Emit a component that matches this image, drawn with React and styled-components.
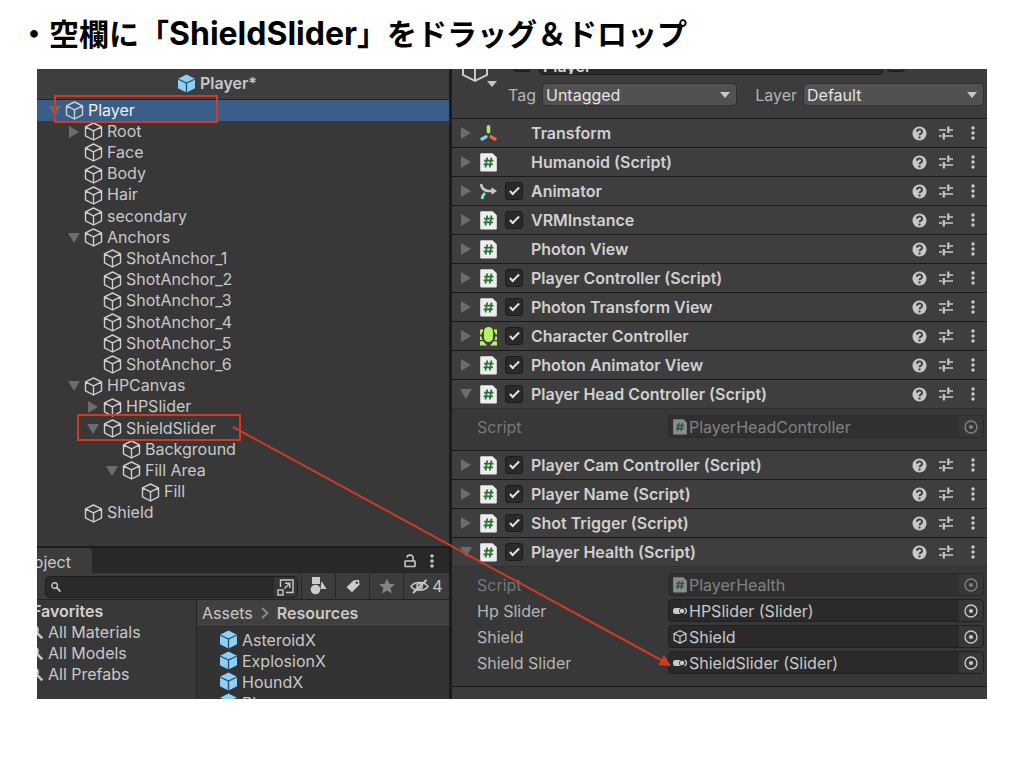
import * as React from "react";
import styled, { createGlobalStyle } from "styled-components";

const GlobalStyle = createGlobalStyle`
  * {
    box-sizing: border-box;
  }
  body {
    margin: 0;
    background: #fff;
  }
  button, input, select {
    font: inherit;
    color: inherit;
    margin: 0;
    padding: 0;
    border: 0;
    background: none;
  }
  svg {
    display: block;
    flex-shrink: 0;
  }
`;

const Slide = styled.main`
  min-height: 100vh;
  background: #fff;
`;
const Title = styled.h1`
  margin: 0;
  padding: 12px 19px 13px;
  font-family: Inter, "Noto Sans CJK JP", sans-serif;
  font-size: 30px;
  line-height: 44px;
  font-weight: 700;
  color: #000;
`;
const TitleName = styled.span`
  font-size: 32px;
`;
const Editor = styled.section`
  position: relative;
  display: grid;
  grid-template-columns: minmax(0, 412fr) minmax(0, 535fr);
  gap: 3px;
  height: 630px;
  margin: 0 37px;
  overflow: hidden;
  background: #1c1c1c;
  color: #c8c8c8;
  font-family: Inter, sans-serif;
  font-size: 16px;
  line-height: 20px;
  white-space: nowrap;
`;
const Annotations = styled.svg`
  position: absolute;
  top: 0;
  left: 0;
  width: 100%;
  height: 100%;
  pointer-events: none;
`;

/* Hierarchy */
const LeftColumn = styled.div`
  display: flex;
  flex-direction: column;
  min-height: 0;
`;
const StageHeader = styled.header`
  display: flex;
  align-items: center;
  justify-content: center;
  gap: 4px;
  flex: none;
  height: 31px;
  padding: 0 52px 2px 0;
  background: #3e3e3e;
  border-bottom: 1px solid #232323;
  font-weight: 600;
`;
const Tree = styled.ul`
  display: grid;
  grid-auto-rows: 1fr;
  flex: none;
  height: 424px;
  margin: 0;
  padding: 0;
  list-style: none;
`;
const TreeRow = styled.li`
  display: flex;
  align-items: center;
  gap: 4px;
  padding-left: ${(p) => 12 + p.$depth * 19}px;
  background: ${(p) => (p.$selected ? "#3a5e87" : "transparent")};
  color: ${(p) => (p.$selected ? "#f0f0f0" : "inherit")};
`;
const TreeName = styled.span`
  padding-bottom: 2px;
  line-height: 18px;
`;
const TreePane = styled.div`
  flex: none;
  height: 477px;
  background: #383838;
`;
const Foldout = styled.button`
  display: flex;
  align-items: center;
  justify-content: center;
  width: 12px;
  height: 16px;
  color: #6c6c6c;
`;

/* Project */
const ProjectPane = styled.div`
  display: flex;
  flex-direction: column;
  flex: 1;
  min-height: 0;
  margin-top: 2px;
  background: #383838;
`;
const TabBar = styled.div`
  display: flex;
  align-items: center;
  flex: none;
  height: 25px;
  padding-right: 7px;
  background: #282828;
`;
const Tab = styled.div`
  display: flex;
  justify-content: flex-end;
  width: 55px;
  height: 25px;
  margin-right: auto;
  padding: 4px 21px 0 0;
  overflow: hidden;
  border-radius: 0 4px 0 0;
  background: #3c3c3c;
`;
const IconButton = styled.button`
  display: flex;
  align-items: center;
  justify-content: center;
  width: ${(p) => p.$width || 16}px;
  height: 20px;
`;
const Toolbar = styled.div`
  display: flex;
  flex: none;
  height: 27px;
  padding-left: 8px;
  background: #3c3c3c;
  border-bottom: 1px solid #232323;
`;
const SearchBox = styled.label`
  display: flex;
  align-items: center;
  flex: 1;
  min-width: 0;
  height: 22px;
  margin: 3px 3px 0 0;
  padding-left: 5px;
  overflow: hidden;
  border: 1px solid #1e1e1e;
  border-radius: 5px;
  background: #2a2a2a;
`;
const SearchInput = styled.input`
  flex: 1;
  min-width: 0;
  outline: none;
`;
const SearchJump = styled.button`
  display: flex;
  align-items: center;
  justify-content: center;
  width: 23px;
  height: 20px;
  background: #353535;
`;
const ToolButton = styled.button`
  display: flex;
  align-items: center;
  justify-content: center;
  gap: 3px;
  width: ${(p) => p.$width || 34}px;
  height: 26px;
  border-left: 1px solid #282828;
`;
const ProjectBody = styled.div`
  display: grid;
  grid-template-columns: minmax(0, 160fr) minmax(0, 252fr);
  flex: 1;
  min-height: 0;
`;
const Favorites = styled.div`
  overflow: hidden;
  border-right: 1px solid #232323;
`;
const FavoritesTitle = styled.div`
  display: flex;
  align-items: center;
  height: 21px;
  margin-left: -5px;
  font-weight: 600;
  color: #d2d2d2;
`;
const FavoriteRow = styled.div`
  display: flex;
  align-items: center;
  gap: 5px;
  height: 21px;
  margin-left: -8px;
`;
const Assets = styled.div`
  overflow: hidden;
  background: #333333;
`;
const Breadcrumb = styled.nav`
  display: flex;
  align-items: center;
  gap: 8px;
  height: 27px;
  padding-left: 5px;
  background: #404040;
  border-bottom: 1px solid #2c2c2c;
`;
const Crumb = styled.a`
  color: inherit;
  text-decoration: none;
  font-weight: ${(p) => (p.$current ? 600 : 400)};
`;
const AssetRow = styled.div`
  display: flex;
  align-items: center;
  gap: 4px;
  height: 21px;
  padding-left: 22px;
`;
const AssetList = styled.div`
  padding-top: 2px;
`;

/* Inspector */
const Inspector = styled.div`
  min-height: 0;
  background: #3c3c3c;
`;
const ObjectHeader = styled.div`
  display: flex;
  gap: 10px;
  height: 49px;
  padding: 0 3px 0 8px;
  background: #3c3c3c;
`;
const ObjectIcon = styled.div`
  display: flex;
  align-items: flex-end;
  flex: none;
  width: 38px;
  height: 18px;
`;
const ObjectFields = styled.div`
  flex: 1;
  min-width: 0;
`;
const NameRow = styled.div`
  display: flex;
  align-items: flex-end;
  gap: 4px;
  height: 6px;
  padding-left: 5px;
  overflow: hidden;
`;
const NameInput = styled.input`
  flex: 1;
  min-width: 0;
  height: 18px;
  margin-left: 4px;
  padding: 0 3px;
  border: 1px solid #1e1e1e;
  border-radius: 4px;
  background: #2a2a2a;
  color: #d2d2d2;
  font-weight: 600;
`;
const StaticLabel = styled.label`
  width: 75px;
  height: 24px;
`;
const TagRow = styled.div`
  display: grid;
  grid-template-columns: 32px minmax(0, 194fr) 62px minmax(0, 180fr);
  align-items: center;
  column-gap: 2px;
  padding-top: 8px;
`;
const FieldLabel = styled.label`
  color: #b4b4b4;
  text-align: ${(p) => p.$align || "left"};
  padding-right: ${(p) => (p.$align ? 4 : 0)}px;
`;
const SelectBox = styled.div`
  display: grid;
  align-items: center;
  border: 1px solid #303030;
  border-radius: 4px;
  background: #515151;
  color: #e4e4e4;

  > * {
    grid-area: 1 / 1;
  }
  > svg {
    justify-self: end;
    margin-right: 6px;
    pointer-events: none;
  }
`;
const Select = styled.select`
  appearance: none;
  width: 100%;
  height: 21px;
  padding-left: 3px;
`;
const Component = styled.section`
  border-top: 1px solid #1a1a1a;
  background: #383838;
`;
const ComponentHeader = styled.header`
  display: flex;
  align-items: center;
  gap: 8px;
  height: 28px;
  padding: 0 6px 0 8px;
  background: #3e3e3e;
`;
const Slot = styled.div`
  width: 18px;
  height: 18px;
  flex: none;
`;
const Check = styled.input`
  appearance: none;
  display: flex;
  justify-content: center;
  flex: none;
  width: 18px;
  height: 18px;
  border: 1px solid #1c1c1c;
  border-radius: 3px;
  background: #2a2a2a;

  &:checked::after {
    content: "";
    width: 3px;
    height: 8px;
    margin-top: 2px;
    border: solid #e6e6e6;
    border-width: 0 2px 2px 0;
    transform: rotate(45deg);
  }
`;
const HeaderCheck = styled(Check)`
  margin-bottom: 3px;
`;
const ComponentName = styled.label`
  flex: 1;
  font-weight: 600;
  color: #d0d0d0;
`;
const HeaderActions = styled.div`
  display: flex;
  gap: 11px;
`;
const Properties = styled.div`
  display: grid;
  gap: 3px;
  padding: 6px 3px 12px 25px;
  border-top: 1px solid #303030;
`;
const Property = styled.div`
  display: grid;
  grid-template-columns: minmax(0, 191fr) minmax(0, 316fr);
  align-items: center;
  opacity: ${(p) => (p.$disabled ? 0.5 : 1)};
`;
const ObjectField = styled.div`
  display: flex;
  align-items: center;
  gap: 2px;
  height: 23px;
  padding-left: 4px;
  overflow: hidden;
  border: 1px solid #202020;
  border-radius: 4px;
  background: #2a2a2a;
`;
const ObjectInput = styled.input`
  flex: 1;
  min-width: 0;
  outline: none;
`;
const Picker = styled.button`
  display: flex;
  align-items: center;
  justify-content: center;
  width: 24px;
  height: 21px;
  background: #373737;
`;
const Footer = styled.div`
  height: 12px;
  border-top: 1px solid #1a1a1a;
`;

const Triangle = ({ open }) => (
  <svg width="12" height="12" viewBox="0 0 12 12" fill="currentColor">
    <path d={open ? "M0 1h12L6 11z" : "M1 0v12l10-6z"} />
  </svg>
);

const Caret = () => (
  <svg width="10" height="6" viewBox="0 0 10 6" fill="#c8c8c8">
    <path d="M0 0h10L5 6z" />
  </svg>
);

const Cube = ({ size = 19, width = 1.4 }) => (
  <svg
    width={size}
    height={size}
    viewBox="0 0 19 19"
    fill="none"
    stroke="#cfcfcf"
    strokeWidth={width}
    strokeLinejoin="round"
  >
    <path d="M9.500 1l8 3.800v9l-8 4.200-8-4.200v-9zM1.500 4.800l8 4 8-4M9.500 8.800V18" />
  </svg>
);

const Prefab = () => (
  <svg width="19" height="19" viewBox="0 0 19 19">
    <path d="M9.500 .5l8.500 4.200v9.600l-8.500 4.200L1 14.300V4.700z" fill="#8bd0f8" />
    <path d="M1 5l8.500 4L18 5M9.500 9v9.500" fill="none" stroke="#2f4c5e" strokeWidth="1.300" />
  </svg>
);

const ScriptIcon = ({ size = 17, paper = "#eeeeee" }) => (
  <svg width={size} height={size + 2} viewBox="0 0 17 19">
    <path d="M1.200 .2H12.500l4.300 4V17.600a1 1 0 0 1-1 1h-14.600a1 1 0 0 1-1-1V1.200a1 1 0 0 1 1-1z" fill={paper} />
    <path d="M7.300 4.500L5.500 14.500M11.500 4.500L9.700 14.500M4 7.700h9.500M3.500 11.400h9.500" stroke="#2f7034" strokeWidth="1.700" />
  </svg>
);

const TransformIcon = () => (
  <svg width="17" height="17" viewBox="0 0 17 17" strokeWidth="3.200" strokeLinecap="round" fill="none">
    <path d="M8.500 1.800v5" stroke="#b4ec51" strokeWidth="3.600" />
    <path d="M6 11.800l-4 2.200" stroke="#84cdfa" />
    <path d="M11 11.800l4 2.200" stroke="#f2683c" />
  </svg>
);

const AnimatorIcon = () => (
  <svg width="17" height="17" viewBox="0 0 17 17" fill="none">
    <path d="M1 1c.5 3.500 3 6.500 7 7h5" stroke="#c8c8c8" strokeWidth="2.600" />
    <path d="M11.500 4.200l5.500 3.800-5.500 3.800z" fill="#c8c8c8" />
    <path d="M5 10.200c-1.800 1.400-2.600 3.300-3 5.800" stroke="#80e6d2" strokeWidth="2.800" />
  </svg>
);

const CharacterIcon = () => (
  <svg width="17" height="19" viewBox="0 0 17 19" fill="#b7f465">
    <rect x="4" y="0" width="9" height="15" rx="4.500" />
    <path d="M0 2.500h3V5H1.800v2.500H0zM17 2.500h-3V5h1.200v2.500H17zM0 9.500h1.800V12l1.500 1H0zM17 9.500h-1.800V12l-1.500 1H17zM0 14.500l3-.5 4 4.500H0zM17 14.500l-3-.5-4 4.500h7z" />
  </svg>
);

const SliderIcon = () => (
  <svg width="14" height="14" viewBox="0 0 14 14" fill="#cccccc">
    <rect x="0" y="4" width="9" height="6" rx="2.500" />
    <circle cx="9" cy="7" r="2.900" fill="#2a2a2a" />
    <circle cx="9" cy="7" r="2.200" />
    <path d="M11.500 4.200a3 3 0 0 1 0 5.600" fill="none" stroke="#cccccc" strokeWidth="1.300" />
  </svg>
);

const HelpIcon = () => (
  <svg width="15" height="15" viewBox="0 0 15 15">
    <circle cx="7.500" cy="7.500" r="7" fill="#c8c8c8" />
    <path
      d="M5 5.800a2.500 2.300 0 1 1 3.800 1.900c-.9.500-1.300.8-1.300 1.600"
      fill="none"
      stroke="#3e3e3e"
      strokeWidth="1.900"
    />
    <rect x="6.500" y="10.500" width="2" height="2" fill="#3e3e3e" />
  </svg>
);

const PresetIcon = () => (
  <svg width="14" height="14" viewBox="0 0 14 14" stroke="#c8c8c8" strokeWidth="1.600">
    <path d="M0 4h7M9 4h5M0 10h3M5 10h9" />
    <path d="M9.300 .5v6.500M4.800 7v6.500" strokeWidth="2.200" />
  </svg>
);

const Dots = () => (
  <svg width="4" height="14" viewBox="0 0 4 14" fill="#c8c8c8">
    <circle cx="2" cy="2" r="1.700" />
    <circle cx="2" cy="7" r="1.700" />
    <circle cx="2" cy="12" r="1.700" />
  </svg>
);

const LockIcon = () => (
  <svg width="12" height="14" viewBox="0 0 12 14" fill="none" stroke="#c8c8c8" strokeWidth="1.600">
    <rect x="1" y="7" width="10" height="5.500" rx=".5" />
    <path d="M3 3.500C3 .5 9 .2 9 3.500V7" />
  </svg>
);

const Magnifier = ({ size = 10 }) => (
  <svg width={size} height={size} viewBox="0 0 10 10" fill="none" stroke="#c8c8c8" strokeWidth="1.400">
    <circle cx="3.600" cy="3.600" r="2.800" />
    <path d="M5.700 5.700L9.500 9.500" strokeWidth="1.800" />
  </svg>
);

const JumpIcon = () => (
  <svg width="17" height="17" viewBox="0 0 17 17" fill="none" stroke="#c8c8c8" strokeWidth="1.400">
    <path d="M3.500 8V1h12.500v12.500H9M7.500 9.500l5-5M8 4.200h4.800V9" />
    <rect x="1" y="11" width="5" height="5" />
  </svg>
);

const TypeIcon = () => (
  <svg width="17" height="18" viewBox="0 0 17 18" fill="#cccccc">
    <rect x="2" y="0" width="8" height="7" />
    <circle cx="5.500" cy="12.500" r="4.800" />
    <path d="M11.500 4l5 8h-6z" />
  </svg>
);

const TagIcon = () => (
  <svg width="14" height="14" viewBox="0 0 14 14" fill="#cccccc">
    <path
      fillRule="evenodd"
      d="M7.500 1.500L13 .8l.6 5L6 13.300 .5 8.300zM10.800 2.400a1.300 1.300 0 1 0 .01 0z"
    />
  </svg>
);

const StarIcon = () => (
  <svg width="16" height="16" viewBox="0 0 16 16" fill="#858585">
    <path d="M8 .5l2.200 5.200 5.600.5-4.300 3.700 1.400 5.600L8 12.500l-4.900 3 1.400-5.600L.2 6.200l5.600-.5z" />
  </svg>
);

const HiddenIcon = () => (
  <svg width="19" height="15" viewBox="0 0 19 15" fill="none" stroke="#c8c8c8" strokeWidth="1.500">
    <path d="M1 7.500C4.500 2 14.500 2 18 7.500 14.500 12.500 4.500 12.500 1 7.500z" />
    <circle cx="9.500" cy="7.200" r="2.600" />
    <path d="M3 14L16.500 1" strokeWidth="2" />
  </svg>
);

const TargetIcon = () => (
  <svg width="14" height="14" viewBox="0 0 14 14">
    <circle cx="7" cy="7" r="6" fill="none" stroke="#c8c8c8" strokeWidth="1.400" />
    <circle cx="7" cy="7" r="2.100" fill="#c8c8c8" />
  </svg>
);

const Chevron = () => (
  <svg width="8" height="12" viewBox="0 0 8 12" fill="none" stroke="#8c8c8c" strokeWidth="1.800">
    <path d="M1 1l5.500 5L1 11" />
  </svg>
);

const tree = [
  { name: "Player", depth: 0, fold: "open", selected: true },
  { name: "Root", depth: 1, fold: "closed" },
  { name: "Face", depth: 1 },
  { name: "Body", depth: 1 },
  { name: "Hair", depth: 1 },
  { name: "secondary", depth: 1 },
  { name: "Anchors", depth: 1, fold: "open" },
  { name: "ShotAnchor_1", depth: 2 },
  { name: "ShotAnchor_2", depth: 2 },
  { name: "ShotAnchor_3", depth: 2 },
  { name: "ShotAnchor_4", depth: 2 },
  { name: "ShotAnchor_5", depth: 2 },
  { name: "ShotAnchor_6", depth: 2 },
  { name: "HPCanvas", depth: 1, fold: "open" },
  { name: "HPSlider", depth: 2, fold: "closed" },
  { name: "ShieldSlider", depth: 2, fold: "open" },
  { name: "Background", depth: 3 },
  { name: "Fill Area", depth: 3, fold: "open" },
  { name: "Fill", depth: 4 },
  { name: "Shield", depth: 1 },
];

const components = [
  { name: "Transform", icon: "transform" },
  { name: "Humanoid (Script)" },
  { name: "Animator", icon: "animator", toggle: true },
  { name: "VRMInstance", toggle: true },
  { name: "Photon View" },
  { name: "Player Controller (Script)", toggle: true },
  { name: "Photon Transform View", toggle: true },
  { name: "Character Controller", icon: "character", toggle: true },
  { name: "Photon Animator View", toggle: true },
  {
    name: "Player Head Controller (Script)",
    toggle: true,
    props: [{ label: "Script", value: "PlayerHeadController", icon: "script", disabled: true }],
  },
  { name: "Player Cam Controller (Script)", toggle: true },
  { name: "Player Name (Script)", toggle: true },
  { name: "Shot Trigger (Script)", toggle: true },
  {
    name: "Player Health (Script)",
    toggle: true,
    props: [
      { label: "Script", value: "PlayerHealth", icon: "script", disabled: true },
      { label: "Hp Slider", value: "HPSlider (Slider)", icon: "slider" },
      { label: "Shield", value: "Shield", icon: "cube" },
      { label: "Shield Slider", value: "ShieldSlider (Slider)", icon: "slider" },
    ],
  },
];

const componentIcons = {
  transform: <TransformIcon />,
  animator: <AnimatorIcon />,
  character: <CharacterIcon />,
};

const fieldIcons = {
  script: <ScriptIcon size={14} paper="#dddddd" />,
  slider: <SliderIcon />,
  cube: <Cube size={14} width={1.7} />,
};

const Hierarchy = () => (
  <TreePane>
    <StageHeader>
      <Prefab />
      Player*
    </StageHeader>
    <Tree>
      {tree.map(({ name, depth, fold, selected }) => (
        <TreeRow key={name} $depth={depth} $selected={selected}>
          <Foldout as={fold ? "button" : "span"} aria-label={fold && `Toggle ${name}`}>
            {fold && <Triangle open={fold === "open"} />}
          </Foldout>
          <Cube />
          <TreeName>{name}</TreeName>
        </TreeRow>
      ))}
    </Tree>
  </TreePane>
);

const Project = () => (
  <ProjectPane>
    <TabBar>
      <Tab>Project</Tab>
      <IconButton $width={24} aria-label="Lock">
        <LockIcon />
      </IconButton>
      <IconButton $width={20} aria-label="Menu">
        <Dots />
      </IconButton>
    </TabBar>
    <Toolbar>
      <SearchBox>
        <Magnifier />
        <SearchInput type="text" aria-label="Search" />
        <SearchJump aria-label="Open in search">
          <JumpIcon />
        </SearchJump>
      </SearchBox>
      <ToolButton aria-label="Search by type">
        <TypeIcon />
      </ToolButton>
      <ToolButton aria-label="Search by label">
        <TagIcon />
      </ToolButton>
      <ToolButton aria-label="Save search">
        <StarIcon />
      </ToolButton>
      <ToolButton $width={46} aria-label="Hidden packages">
        <HiddenIcon />4
      </ToolButton>
    </Toolbar>
    <ProjectBody>
      <Favorites>
        <FavoritesTitle>Favorites</FavoritesTitle>
        {["All Materials", "All Models", "All Prefabs"].map((name) => (
          <FavoriteRow key={name}>
            <Magnifier size={14} />
            {name}
          </FavoriteRow>
        ))}
      </Favorites>
      <Assets>
        <Breadcrumb>
          <Crumb href="#assets">Assets</Crumb>
          <Chevron />
          <Crumb href="#resources" $current>
            Resources
          </Crumb>
        </Breadcrumb>
        <AssetList>
          {["AsteroidX", "ExplosionX", "HoundX", "Player"].map((name) => (
            <AssetRow key={name}>
              <Prefab />
              {name}
            </AssetRow>
          ))}
        </AssetList>
      </Assets>
    </ProjectBody>
  </ProjectPane>
);

const ComponentPanel = ({ name, icon, toggle, props }) => {
  const id = React.useId();
  return (
    <Component>
      <ComponentHeader>
        <Foldout aria-label={`Toggle ${name}`}>
          <Triangle open={Boolean(props)} />
        </Foldout>
        {componentIcons[icon] || <ScriptIcon />}
        {toggle ? <Check id={id} type="checkbox" defaultChecked /> : <Slot />}
        <ComponentName as={toggle ? "label" : "span"} htmlFor={toggle ? id : undefined}>
          {name}
        </ComponentName>
        <HeaderActions>
          <IconButton aria-label="Help">
            <HelpIcon />
          </IconButton>
          <IconButton aria-label="Presets">
            <PresetIcon />
          </IconButton>
          <IconButton aria-label="More">
            <Dots />
          </IconButton>
        </HeaderActions>
      </ComponentHeader>
      {props && (
        <Properties>
          {props.map((prop) => (
            <Property key={prop.label} $disabled={prop.disabled}>
              <FieldLabel htmlFor={id + prop.label}>{prop.label}</FieldLabel>
              <ObjectField>
                {fieldIcons[prop.icon]}
                <ObjectInput id={id + prop.label} type="text" readOnly value={prop.value} />
                <Picker aria-label={`Pick ${prop.label}`}>
                  <TargetIcon />
                </Picker>
              </ObjectField>
            </Property>
          ))}
        </Properties>
      )}
    </Component>
  );
};

const App = () => (
  <Slide>
    <GlobalStyle />
    <Title>
      ・空欄に「<TitleName>ShieldSlider</TitleName>」をドラッグ＆ドロップ
    </Title>
    <Editor>
      <LeftColumn>
        <Hierarchy />
        <Project />
      </LeftColumn>
      <Inspector>
        <ObjectHeader>
          <ObjectIcon>
            <svg width="38" height="18" viewBox="0 0 38 18" fill="none">
              <path d="M3 0v6l12 6 12-6V0M15 0v12" stroke="#c8c8c8" strokeWidth="2" />
              <path d="M27 12h10l-5 6z" fill="#c8c8c8" />
            </svg>
          </ObjectIcon>
          <ObjectFields>
            <NameRow>
              <HeaderCheck type="checkbox" aria-label="Active" />
              <NameInput type="text" aria-label="Name" defaultValue="Player" />
              <HeaderCheck id="static" type="checkbox" />
              <StaticLabel htmlFor="static">Static</StaticLabel>
            </NameRow>
            <TagRow>
              <FieldLabel htmlFor="tag">Tag</FieldLabel>
              <SelectBox>
                <Select id="tag">
                  <option>Untagged</option>
                </Select>
                <Caret />
              </SelectBox>
              <FieldLabel htmlFor="layer" $align="right">
                Layer
              </FieldLabel>
              <SelectBox>
                <Select id="layer">
                  <option>Default</option>
                </Select>
                <Caret />
              </SelectBox>
            </TagRow>
          </ObjectFields>
        </ObjectHeader>
        {components.map((component) => (
          <ComponentPanel key={component.name} {...component} />
        ))}
        <Footer />
      </Inspector>
      <Annotations fill="none" stroke="#d03a20" strokeWidth="2">
        <rect x="18" y="27" width="162" height="26" />
        <rect x="41" y="346" width="162" height="25" />
        <path d="M196 358L624 591" />
        <path d="M634 597l-13-1 6-10z" fill="#d03a20" stroke="none" />
      </Annotations>
    </Editor>
  </Slide>
);

export default App;
